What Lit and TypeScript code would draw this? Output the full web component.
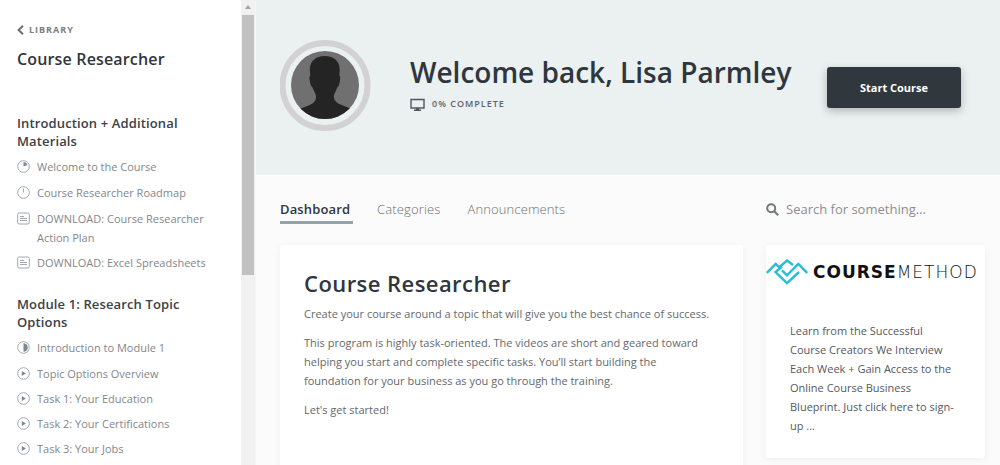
import { LitElement, html, css, svg } from "lit";
import { customElement, state } from "lit/decorators.js";

type Kind = "quarter" | "start" | "half" | "doc" | "play";
interface Lesson { kind: Kind; title: string; }
interface Section { title: string; lessons: Lesson[]; }

const SECTIONS: Section[] = [
  {
    title: "Introduction + Additional Materials",
    lessons: [
      { kind: "quarter", title: "Welcome to the Course" },
      { kind: "start", title: "Course Researcher Roadmap" },
      { kind: "doc", title: "DOWNLOAD: Course Researcher Action Plan" },
      { kind: "doc", title: "DOWNLOAD: Excel Spreadsheets" },
    ],
  },
  {
    title: "Module 1: Research Topic Options",
    lessons: [
      { kind: "half", title: "Introduction to Module 1" },
      { kind: "play", title: "Topic Options Overview" },
      { kind: "play", title: "Task 1: Your Education" },
      { kind: "play", title: "Task 2: Your Certifications" },
      { kind: "play", title: "Task 3: Your Jobs" },
    ],
  },
];

const GLYPHS = {
  quarter: svg`<circle cx="6.5" cy="6.5" r="5.8"/><path class="fill" d="M6.5 2v4.5l4-1.500A4.500 4.500 0 0 0 6.500 2z"/>`,
  start: svg`<circle cx="6.5" cy="6.5" r="5.8"/><path d="M6.5 2.600v4"/>`,
  half: svg`<circle cx="6.5" cy="6.5" r="5.8"/><path class="fill" d="M6.5 2.200a4.300 4.300 0 0 1 0 8.600z"/>`,
  doc: svg`<rect x=".7" y="1" width="11.6" height="11" rx="1.4"/><path d="M3 4.5h4M3 6.500h7M3 8.500h7"/>`,
  play: svg`<circle cx="6.5" cy="6.5" r="5.8"/><path class="fill" d="M4.800 4v5l4-2.500z"/>`,
};

@customElement("course-sidebar")
export class CourseSidebar extends LitElement {
  static styles = css`
    :host { display: flex; min-height: 0; background: #fff; }
    .panel { flex: 1; min-width: 0; overflow: hidden; padding: 22px 24px 0 17px; }
    .back { display: flex; align-items: center; gap: 5px; font-size: 9px; line-height: 16px; font-weight: 700; letter-spacing: 1px; color: #7b7e82; text-decoration: none; }
    .back svg { width: 7px; height: 10px; fill: none; stroke: #6c6f73; stroke-width: 2; }
    h2 { margin: 9px 0 43px; font-size: 16px; line-height: 24px; font-weight: 600; letter-spacing: .01em; color: #2f363d; }
    h3 { margin: 0 0 7px; font-size: 13px; line-height: 18px; font-weight: 600; letter-spacing: .01em; color: #3b4147; }
    ul { list-style: none; margin: 0 0 23px; padding: 0; display: grid; gap: 6px; }
    .lesson { display: flex; gap: 7px; font-size: 11px; line-height: 19px; color: #83878c; text-decoration: none; }
    .timed { min-height: 20px; }
    .lesson svg { flex: none; width: 13px; height: 13px; margin-top: 3px; fill: none; stroke: #a0a8b2; }
    .lesson .fill { fill: #7b8796; stroke: none; }
    .track { flex: none; width: 14px; background: #f1f1f1; display: flex; flex-direction: column; align-items: center; border-right: 1px solid #f4f6f6; }
    .arrow { margin: 5px 0 6px; border: 3px solid transparent; border-top: 0; border-bottom: 4px solid #a3a3a3; }
    .thumb { width: 12px; height: 56%; background: #c1c1c1; }
  `;

  render() {
    return html`
      <div class="panel">
        <a class="back" href="#library"><svg viewBox="0 0 7 10" aria-hidden="true"><path d="M6 .8 1.600 5 6 9.200"/></svg>LIBRARY</a>
        <h2>Course Researcher</h2>
        ${SECTIONS.map((s) => html`
          <h3>${s.title}</h3>
          <ul>
            ${s.lessons.map((l) => html`<li>
              <a class="lesson ${["doc", "play"].includes(l.kind) ? "" : "timed"}" href="#lesson">
                <svg viewBox="0 0 13 13" aria-hidden="true">${GLYPHS[l.kind]}</svg><span>${l.title}</span>
              </a></li>`)}
          </ul>`)}
      </div>
      <div class="track"><span class="arrow"></span><span class="thumb"></span></div>
    `;
  }
}

@customElement("course-header")
export class CourseHeader extends LitElement {
  static styles = css`
    :host { display: flex; align-items: center; padding: 40px 39px 44px 24px; background: #ebf0f1; }
    .avatar { flex: none; width: 91px; height: 91px; }
    .copy { flex: 1; margin: 0 0 6px 39px; min-width: 0; }
    h1 { margin: 0; font-size: 28px; line-height: 38px; font-weight: 600; color: #2f363d; }
    .progress { display: flex; align-items: center; gap: 7px; margin-top: 5px; font-size: 9px; line-height: 16px; font-weight: 600; letter-spacing: 1px; color: #5e646a; }
    .progress svg { width: 15px; height: 13px; }
    button { flex: none; width: 134px; height: 41px; margin-top: 4px; border: 0; border-radius: 3px; background: #30373d; color: #fff; font: 700 11px/20px "Open Sans", sans-serif; box-shadow: 0 3px 8px rgba(0, 0, 0, .25); cursor: pointer; }
  `;

  render() {
    return html`
      <svg class="avatar" viewBox="0 0 91 91" role="img" aria-label="Profile picture">
        <defs><clipPath id="disc"><circle cx="45" cy="45" r="34"/></clipPath></defs>
        <circle cx="45" cy="45.5" r="42.5" fill="none" stroke="#d2d2d2" stroke-width="6"/>
        <circle cx="45" cy="45" r="34" fill="#707070"/>
        <path clip-path="url(#disc)" fill="#242424" d="M44.800 16c-9 0-15 5.200-15 13.500l.5 6.500c-1.200 0-1 2-.6 4 .5 3.500 1.200 6.500 2.600 7l3.500 8c1 5-1.500 8-6 10L19.500 69v15h52V69l-11-4.500c-4.500-2-7.500-5-6.500-9.500l3.500-8c1.400-.5 2-3.500 2.500-7 .3-2 .5-4-.6-4l.3-6.500C59.700 21 53.500 16 44.800 16z"/>
      </svg>
      <div class="copy">
        <h1>Welcome back, Lisa Parmley</h1>
        <div class="progress">
          <svg viewBox="0 0 15 13" aria-hidden="true"><path d="M1 1.500h13v8.500H1z" fill="none" stroke="#4f5862" stroke-width="1.400"/><path d="M6 10h3v1.500h2V13H4v-1.500h2z" fill="#4f5862"/></svg>
          0% COMPLETE
        </div>
      </div>
      <button type="button">Start Course</button>
    `;
  }
}

@customElement("course-promo")
export class CoursePromo extends LitElement {
  static styles = css`
    :host { display: block; background: #fff; border-radius: 3px; box-shadow: 0 2px 8px rgba(0, 0, 0, .05); }
    .logo { display: flex; align-items: center; gap: 5px; height: 27px; padding-top: 13px; white-space: nowrap; }
    .logo svg { flex: none; width: 42px; height: 27px; fill: none; stroke: #27bcd9; stroke-width: 2.4; }
    .name { font: 700 17px/20px "DejaVu Sans", sans-serif; letter-spacing: 1px; color: #111; }
    .light { font-weight: 200; }
    p { margin: 0; padding: 36px 24px 23px; font-size: 11px; line-height: 19px; color: #55595e; }
  `;

  render() {
    return html`
      <div class="logo">
        <svg viewBox="0 0 42 27" aria-hidden="true"><path d="M.8 15 9.700 6l3.600 3.200L21 2.500l6 4.500M16 8.500 9.500 14 21 25.200 33 14M16 12.300l5 5L32.300 6 41.200 15"/></svg>
        <span class="name">COURSE<span class="light">METHOD</span></span>
      </div>
      <p>Learn from the Successful Course Creators We Interview Each Week + Gain Access to the Online Course Business Blueprint. Just click here to sign-up ...</p>
    `;
  }
}

@customElement("app-root")
export class AppRoot extends LitElement {
  @state() private tab = "Dashboard";

  static styles = css`
    :host { display: grid; grid-template-columns: 256px minmax(0, 1fr); grid-template-rows: minmax(0, 1fr); height: 100vh; overflow: hidden; font-family: "Open Sans", sans-serif; background: #fbfbfb; }
    main { min-width: 0; }
    .body { display: grid; grid-template-columns: minmax(0, 1fr) 219px; column-gap: 23px; padding: 22px 15px 0 24px; }
    .tabs { display: flex; align-items: flex-start; gap: 24px; height: 24px; }
    .tab { padding: 0 3px 0 0; border: 0; border-bottom: 3px solid transparent; background: none; font: 300 13px/24px "Open Sans", sans-serif; letter-spacing: .01em; color: #6b6f74; cursor: pointer; }
    .on { font-weight: 600; color: #2f363d; border-color: #95a3ab; }
    .search { display: flex; align-items: center; gap: 7px; height: 24px; }
    .search svg { flex: none; width: 13px; height: 13px; fill: none; stroke: #73767a; stroke-width: 2; }
    .search input { flex: 1; min-width: 0; padding: 0; border: 0; outline: 0; background: none; font: 400 13px/20px "Open Sans", sans-serif; }
    .search input::placeholder { color: #8b8e92; opacity: 1; }
    .tabs, .search { margin-bottom: 24px; }
    article { height: 100vh; padding: 23px 30px 24px 24px; box-sizing: border-box; background: #fff; border-radius: 3px; box-shadow: 0 2px 8px rgba(0, 0, 0, .05); }
    h2 { margin: 0 0 6px; font-size: 22px; line-height: 30px; font-weight: 600; letter-spacing: .02em; color: #2f363d; }
    p { margin: 0 0 10px; font-size: 11px; line-height: 19px; color: #65686c; }
    course-promo { align-self: start; }
  `;

  render() {
    return html`
      <course-sidebar></course-sidebar>
      <main>
        <course-header></course-header>
        <div class="body">
          <nav class="tabs">
            ${["Dashboard", "Categories", "Announcements"].map((t) => html`
              <button type="button" class="tab ${t === this.tab ? "on" : ""}" @click=${() => (this.tab = t)}>${t}</button>`)}
          </nav>
          <label class="search">
            <svg viewBox="0 0 13 13" aria-hidden="true"><circle cx="5.2" cy="5.2" r="4"/><path d="m8.200 8.200 4 4"/></svg>
            <input type="search" placeholder="Search for something..." aria-label="Search for something" />
          </label>
          <article>
            <h2>Course Researcher</h2>
            <p>Create your course around a topic that will give you the best chance of success.</p>
            <p>This program is highly task-oriented. The videos are short and geared toward helping you start and complete specific tasks. You’ll start building the foundation for your business as you go through the training.</p>
            <p>Let's get started!</p>
          </article>
          <course-promo></course-promo>
        </div>
      </main>
    `;
  }
}
